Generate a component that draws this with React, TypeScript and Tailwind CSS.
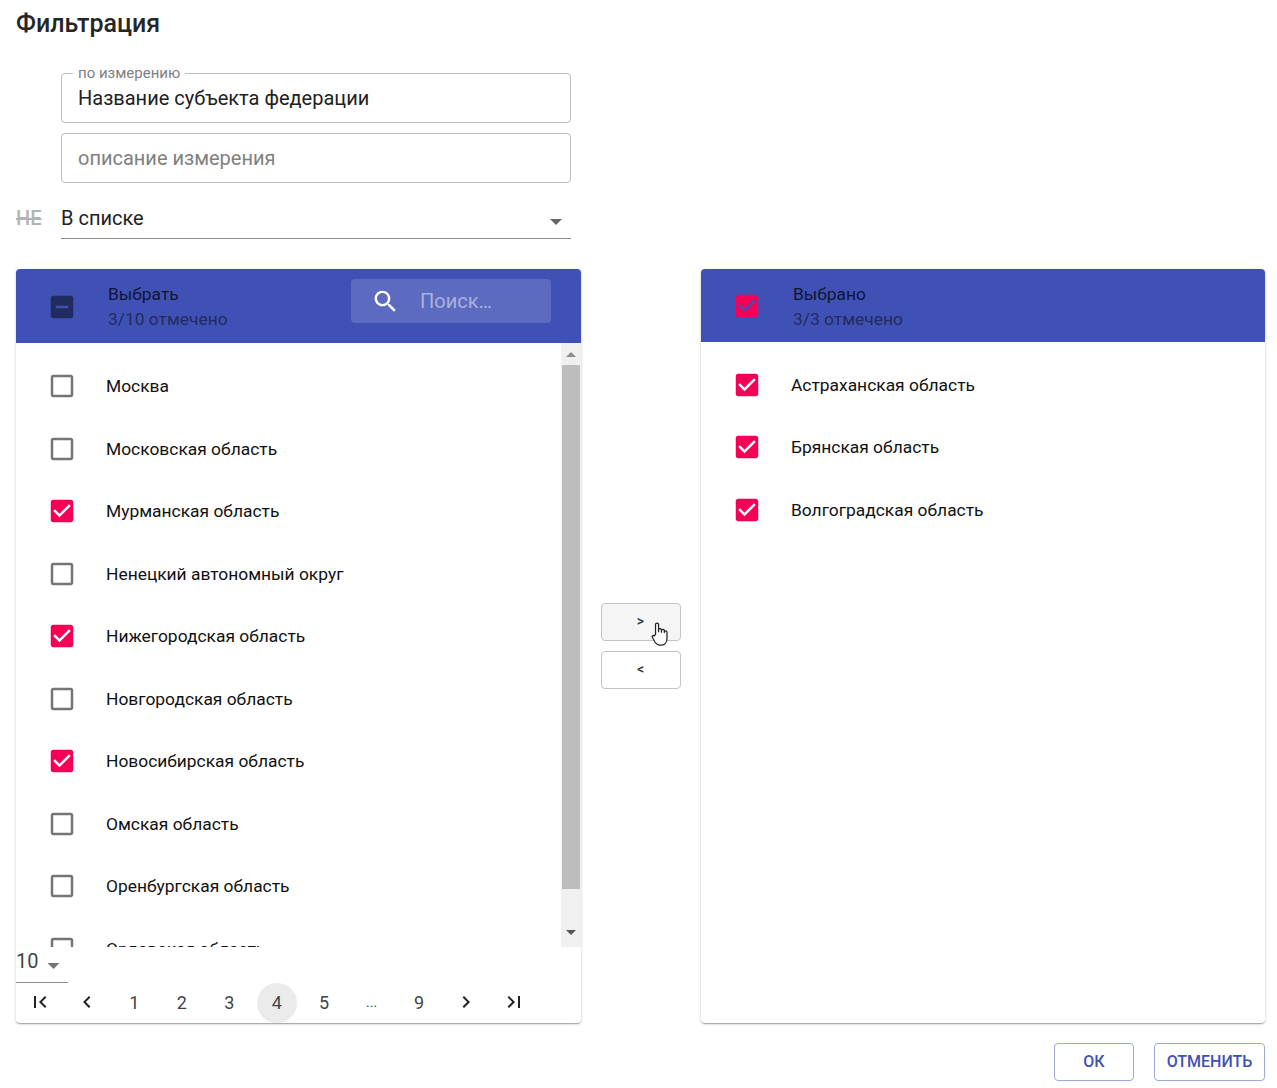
import React from "react";

const P = {
  checked: "M19 3H5c-1.11 0-2 .9-2 2v14c0 1.1.89 2 2 2h14c1.11 0 2-.9 2-2V5c0-1.1-.89-2-2-2zm-9 14l-5-5 1.41-1.41L10 14.17l7.59-7.59L19 8l-9 9z",
  outline: "M19 5v14H5V5h14m0-2H5c-1.1 0-2 .9-2 2v14c0 1.1.9 2 2 2h14c1.1 0 2-.9 2-2V5c0-1.1-.9-2-2-2z",
  indet: "M19 3H5c-1.1 0-2 .9-2 2v14c0 1.1.9 2 2 2h14c1.1 0 2-.9 2-2V5c0-1.1-.9-2-2-2zm-2 10H7v-2h10v2z",
  first: "M18.41 16.59L13.82 12l4.59-4.59L17 6l-6 6 6 6zM6 6h2v12H6z",
  last: "M5.59 7.41L10.18 12l-4.59 4.59L7 18l6-6-6-6zM16 6h2v12h-2z",
  prev: "M15.41 7.41L14 6l-6 6 6 6 1.41-1.41L10.83 12z",
  next: "M10 6L8.59 7.41 13.17 12l-4.58 4.59L10 18l6-6z",
  search: "M15.5 14h-.79l-.28-.27C15.41 12.59 16 11.11 16 9.5 16 5.91 13.09 3 9.5 3S3 5.91 3 9.5 5.91 16 9.5 16c1.61 0 3.09-.59 4.23-1.57l.27.28v.79l5 4.99L20.49 19l-4.99-5zm-6 0C7.01 14 5 11.99 5 9.5S7.01 5 9.5 5 14 7.01 14 9.5 11.99 14 9.5 14z",
};

function Icon({ d, className }: { d: string; className: string }) {
  return (
    <svg viewBox="0 0 24 24" className={className} fill="currentColor">
      <path d={d} />
    </svg>
  );
}

function Arrow({ className }: { className: string }) {
  return (
    <svg viewBox="0 0 12 6" className={className} fill="currentColor">
      <path d="M0 0h12L6 6z" />
    </svg>
  );
}

function Row({ label, on }: { label: string; on?: boolean }) {
  return (
    <div className="flex h-[62.5px] shrink-0 items-center text-[17.4px] leading-[24px] text-[#111]">
      <Icon
        d={on ? P.checked : P.outline}
        className={`ml-[31px] h-[30px] w-[30px] shrink-0 ${on ? "text-[#f50057]" : "text-[#757575]"}`}
      />
      <span className="ml-[29px]">{label}</span>
    </div>
  );
}

const leftRows: [string, boolean][] = [
  ["Москва", false],
  ["Московская область", false],
  ["Мурманская область", true],
  ["Ненецкий автономный округ", false],
  ["Нижегородская область", true],
  ["Новгородская область", false],
  ["Новосибирская область", true],
  ["Омская область", false],
  ["Оренбургская область", false],
  ["Орловская область", false],
];

function PageButton({ children, active }: { children: React.ReactNode; active?: boolean }) {
  return (
    <div
      className={`flex h-10 w-10 shrink-0 items-center justify-center rounded-full pb-[2px] text-[18px] text-[#444] ${
        active ? "bg-[#ebebeb]" : ""
      }`}
    >
      {children}
    </div>
  );
}

const panelShadow =
  "shadow-[0_1px_3px_rgba(0,0,0,0.2),0_1px_1px_rgba(0,0,0,0.14),0_2px_1px_-1px_rgba(0,0,0,0.12)]";

export default function App() {
  return (
    <div
      className="relative flex h-[1088px] w-[1277px] flex-col overflow-hidden bg-white pl-4 pr-3 text-[#212121]"
      style={{ fontFamily: "Roboto, 'Noto Sans', sans-serif" }}
    >
      <h1 className="h-[48px] text-[25px] font-medium leading-[48px] text-[#262626]">Фильтрация</h1>

      <div className="ml-[45px] mt-[25px] flex w-[510px] flex-col gap-[10px]">
        <div className="relative flex h-[50px] items-center rounded-[4px] border border-[#bdbdbd] px-[16px] text-[20px]">
          <span className="absolute -top-[9px] left-[11px] bg-white px-[5px] text-[15px] leading-[16px] text-[#808080]">
            по измерению
          </span>
          Название субъекта федерации
        </div>
        <div className="flex h-[50px] items-center rounded-[4px] border border-[#bdbdbd] px-[16px] text-[20px] text-[#808080]">
          описание измерения
        </div>
      </div>

      <div className="mt-[16px] flex h-[40px] items-start">
        <span className="w-[45px] pt-[7px] text-[20px] font-medium leading-[24px] text-[#b3b3b3] line-through">НЕ</span>
        <div className="flex h-[40px] w-[510px] items-start justify-between border-b border-[#8c8c8c] pt-[7px] text-[20px] leading-[24px]">
          В списке
          <Arrow className="mr-[9px] mt-[13px] h-[6px] w-[12px] text-[#666]" />
        </div>
      </div>

      <div className="mt-[30px] flex h-[754px] items-stretch">
        <section className={`flex w-[565px] flex-col overflow-hidden rounded-[4px] bg-white ${panelShadow}`}>
          <header className="flex h-[74px] shrink-0 items-center bg-[#3f51b5]">
            <Icon d={P.indet} className="ml-[31px] mt-[1px] h-[30px] w-[30px] shrink-0 text-[#222b60]" />
            <div className="ml-[31px] pt-[1px] text-[17.4px] leading-[25px]">
              <div className="text-[#111633]">Выбрать</div>
              <div className="text-[#222b60]">3/10 отмечено</div>
            </div>
            <div className="ml-auto mb-[10px] mr-[30px] flex h-[44px] w-[200px] items-center rounded-[4px] bg-[#5c6bc0]">
              <Icon d={P.search} className="ml-[20px] h-[29px] w-[29px] text-white" />
              <span className="ml-[20px] text-[20px] text-[#a9b1dd]">Поиск…</span>
            </div>
          </header>
          <div className="flex h-[604px] shrink-0">
            <div className="flex-1 overflow-hidden pt-[11.75px]">
              {leftRows.map(([label, on]) => (
                <Row key={label} label={label} on={on} />
              ))}
            </div>
            <div className="flex w-[20px] shrink-0 flex-col items-center bg-[#f0f0f0]">
              <Arrow className="mt-[9px] h-[5px] w-[10px] rotate-180 text-[#8c8c8c]" />
              <div className="mt-[8px] h-[524px] w-[18px] shrink-0 bg-[#bdbdbd]" />
              <Arrow className="mt-[41px] h-[5px] w-[10px] text-[#555]" />
            </div>
          </div>
          <div className="flex h-[36px] w-[52px] shrink-0 items-start justify-between border-b border-[#8c8c8c] pt-[2px] text-[20px] leading-[24px] text-[#444]">
            10
            <Arrow className="mr-[8px] mt-[14px] h-[6px] w-[13px] text-[#757575]" />
          </div>
          <div className="flex h-[40px] shrink-0 items-center gap-[7.45px] pl-[3.5px]">
            <PageButton><Icon d={P.first} className="h-[24px] w-[24px] text-[#222]" /></PageButton>
            <PageButton><Icon d={P.prev} className="h-[24px] w-[24px] text-[#222]" /></PageButton>
            <PageButton>1</PageButton>
            <PageButton>2</PageButton>
            <PageButton>3</PageButton>
            <PageButton active>4</PageButton>
            <PageButton>5</PageButton>
            <PageButton><span className="text-[14px]">...</span></PageButton>
            <PageButton>9</PageButton>
            <PageButton><Icon d={P.next} className="h-[24px] w-[24px] text-[#222]" /></PageButton>
            <PageButton><Icon d={P.last} className="h-[24px] w-[24px] text-[#222]" /></PageButton>
          </div>
        </section>

        <div className="flex w-[120px] shrink-0 flex-col items-center gap-[10px] pt-[334px]">
          <div className="relative flex h-[38px] w-[80px] items-center justify-center rounded-[4px] border border-[#c4c4c4] bg-[#f5f5f5] pb-[1px] pr-[1px] text-[14px] font-medium text-[#333]">
            &gt;
            <svg viewBox="0 0 20 28" className="absolute left-[49px] top-[17px] h-[25px] w-[18px]" fill="#fff" stroke="#222" strokeWidth="1.4" strokeLinejoin="round">
              <path d="M5 15V4a1.7 1.7 0 0 1 3.4 0v8V10a1.6 1.6 0 0 1 3.2 0v2.5V11a1.6 1.6 0 0 1 3.2 0v2V12.5a1.5 1.5 0 0 1 3 0V20c0 4-2.5 7-6 7h-2c-2.5 0-4-1.200-5.500-3.500L1.500 18.500c-.9-1.500.8-3 2.200-1.800z" />
            </svg>
          </div>
          <div className="flex h-[38px] w-[80px] items-center justify-center rounded-[4px] border border-[#c4c4c4] bg-white pb-[1px] pr-[1px] text-[14px] font-medium text-[#333]">
            &lt;
          </div>
        </div>

        <section className={`flex w-[564px] flex-col overflow-hidden rounded-[4px] bg-white ${panelShadow}`}>
          <header className="flex h-[73px] shrink-0 items-center bg-[#3f51b5]">
            <Icon d={P.checked} className="ml-[31px] mt-[1px] h-[30px] w-[30px] shrink-0 text-[#f50057]" />
            <div className="ml-[31px] pt-[2px] text-[17.4px] leading-[25px]">
              <div className="text-[#111633]">Выбрано</div>
              <div className="text-[#222b60]">3/3 отмечено</div>
            </div>
          </header>
          <div className="flex flex-col pt-[11.25px]">
            <Row label="Астраханская область" on />
            <Row label="Брянская область" on />
            <Row label="Волгоградская область" on />
          </div>
        </section>
      </div>

      <div className="mt-[20px] flex justify-end gap-[20px]">
        <div className="flex h-[38px] w-[80px] items-center justify-center rounded-[4px] border border-[#9fa8da] text-[16px] font-medium text-[#3f51b5]">
          ОК
        </div>
        <div className="flex h-[38px] w-[111px] items-center justify-center rounded-[4px] border border-[#9fa8da] text-[16px] font-medium text-[#3f51b5]">
          ОТМЕНИТЬ
        </div>
      </div>
    </div>
  );
}
